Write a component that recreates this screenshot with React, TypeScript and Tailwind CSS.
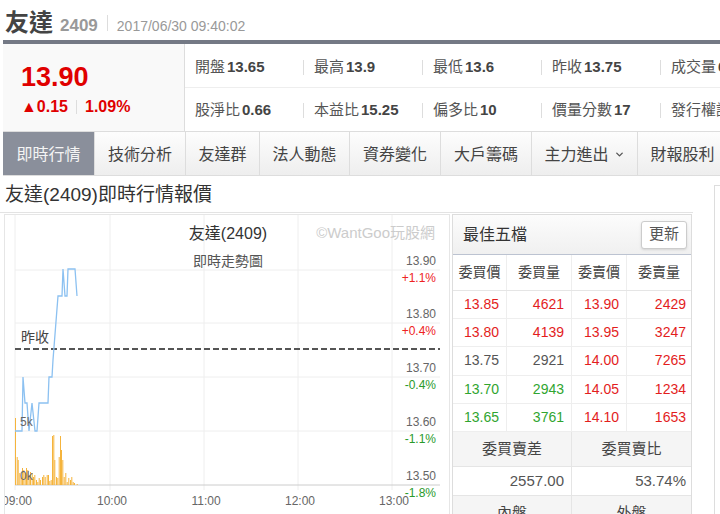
import { ChevronDown } from "lucide-react";

const infoRows = [
  [
    ["開盤", "13.65"],
    ["最高", "13.9"],
    ["最低", "13.6"],
    ["昨收", "13.75"],
    ["成交量", "6548"],
  ],
  [
    ["股淨比", "0.66"],
    ["本益比", "15.25"],
    ["偏多比", "10"],
    ["價量分數", "17"],
    ["發行權證", "有"],
  ],
];

const tabs = [
  { label: "即時行情", w: "w-[92px]", active: true },
  { label: "技術分析", w: "w-[91px]" },
  { label: "友達群", w: "w-[74px]" },
  { label: "法人動態", w: "w-[90px]" },
  { label: "資券變化", w: "w-[91px]" },
  { label: "大戶籌碼", w: "w-[91px]" },
  { label: "主力進出", w: "w-[106px]", menu: true },
  { label: "財報股利", w: "w-[90px]" },
];

const RED = "text-[#e31d1d]";
const GREEN = "text-[#30a530]";
const GRAY = "text-[#555]";

const book = [
  { bid: "13.85", bv: "4621", ask: "13.90", av: "2429", c: RED },
  { bid: "13.80", bv: "4139", ask: "13.95", av: "3247", c: RED },
  { bid: "13.75", bv: "2921", ask: "14.00", av: "7265", c: GRAY },
  { bid: "13.70", bv: "2943", ask: "14.05", av: "1234", c: GREEN },
  { bid: "13.65", bv: "3761", ask: "14.10", av: "1653", c: GREEN },
];

// volume bars, page coords [x, top]
const bars: [number, number][] = [
  [15, 418], [16.7, 457], [17.7, 460], [19.3, 473], [20.7, 478], [22, 468],
  [23.3, 470], [24.7, 473], [26, 468], [27.3, 470], [28.7, 475], [30, 472],
  [31.7, 473], [33, 477], [34.3, 475], [36, 480], [37.3, 482], [38.7, 478],
  [40, 480], [42, 477], [43.3, 475], [44.7, 477], [46.7, 475], [48, 475],
  [49.3, 481], [50.7, 480], [52, 436], [53.3, 435], [54.3, 460], [56, 477],
  [57.3, 478], [58.7, 457], [60, 436], [61, 450], [62.3, 460], [63.7, 477],
  [65.3, 473], [66.7, 482], [68.3, 478], [70, 480], [71.3, 477], [72.7, 482],
  [74, 483], [76.7, 484],
];

const priceLine =
  "M15,431 L22,431 L23,377 L25,403 L27,403 L29,431 L32,403 L35,431 L37,431 L39,403 L48,403 L49,377 L52,377 L53,360 L58,296 L62,296 L63,269 L65,296 L67,296 L68,269 L75,269 L77,296";

const levels = [
  { y: 270, p: "13.90", pct: "+1.1%", up: true },
  { y: 323, p: "13.80", pct: "+0.4%", up: true },
  { y: 377, p: "13.70", pct: "-0.4%", up: false },
  { y: 431, p: "13.60", pct: "-1.1%", up: false },
  { y: 485, p: "13.50", pct: "-1.8%", up: false },
];

const hours = [
  { x: 15, t: "09:00" },
  { x: 110, t: "10:00" },
  { x: 204, t: "11:00" },
  { x: 298, t: "12:00" },
  { x: 392, t: "13:00" },
];

function TrendChart() {
  return (
    <svg width={444} height={299} viewBox="5 215 444 299" className="block">
      {hours.map((h) => (
        <line key={h.t} x1={h.x} x2={h.x} y1={215} y2={490} stroke="#eeeeee" strokeWidth={1} />
      ))}
      {levels.map((l) => (
        <line
          key={l.p}
          x1={15}
          x2={440}
          y1={l.y}
          y2={l.y}
          stroke={l.y === 485 ? "#cccccc" : "#eeeeee"}
          strokeWidth={1}
        />
      ))}
      <line x1={15} x2={440} y1={349} y2={349} stroke="#555" strokeWidth={2} strokeDasharray="6 3" />

      <text x={228} y={239} textAnchor="middle" fontSize={16} fill="#333">友達(2409)</text>
      <text x={228} y={266} textAnchor="middle" fontSize={14} fill="#555">即時走勢圖</text>
      <text x={435} y={238} textAnchor="end" fontSize={15} fill="#cccccc">©WantGoo玩股網</text>

      {bars.map(([x, top], i) => (
        <rect key={i} x={x} y={top} width={1} height={485 - top} fill="#f5b43c" />
      ))}
      <path d={priceLine} fill="none" stroke="#8cc1f1" strokeWidth={1.3} />

      <text x={21} y={342} fontSize={14} fill="#444">昨收</text>
      <text x={20} y={426} fontSize={12} fill="#666">5k</text>
      <text x={20} y={480} fontSize={12} fill="#666">0k</text>

      {levels.map((l) => (
        <g key={l.pct}>
          <text x={436} y={l.y - 5} textAnchor="end" fontSize={12} fill="#666">{l.p}</text>
          <text x={436} y={l.y + 12} textAnchor="end" fontSize={12} fill={l.up ? "#ee2222" : "#2a9a2a"}>
            {l.pct}
          </text>
        </g>
      ))}
      {hours.map((h) => (
        <text key={h.t} x={h.x + 2} y={505} textAnchor="middle" fontSize={12} fill="#666">
          {h.t}
        </text>
      ))}
    </svg>
  );
}

function BestFive() {
  return (
    <div className="w-[240px] h-[301px] shrink-0 border border-[#dddddd] overflow-hidden">
      <div className="flex h-[40px] items-center justify-between border-b border-[#bcc3d1] bg-gradient-to-b from-[#fcfcfc] to-[#f0f0f0] pl-[10px] pr-[4px]">
        <span className="text-[16px] text-[#333]">最佳五檔</span>
        <button className="h-[28px] w-[46px] rounded-[3px] border border-[#cccccc] bg-white text-[15px] text-[#555] shadow-sm">
          更新
        </button>
      </div>
      <div className="grid h-[36px] grid-cols-[54px_65px_55px_1fr] border-b border-[#e5e5e5] text-[14px] text-[#444]">
        {["委買價", "委買量", "委賣價", "委賣量"].map((h, i) => (
          <div key={h} className={`flex items-center justify-center ${i < 3 ? "border-r border-[#eeeeee]" : ""}`}>
            {h}
          </div>
        ))}
      </div>
      {book.map((r) => (
        <div key={r.bid} className="grid h-[28.2px] grid-cols-[54px_65px_55px_1fr] border-b border-[#eeeeee] text-[14px]">
          <div className={`flex items-center justify-end border-r border-[#eeeeee] pr-[7px] ${r.c}`}>{r.bid}</div>
          <div className={`flex items-center justify-end border-r border-[#eeeeee] pr-[7px] ${r.c}`}>{r.bv}</div>
          <div className={`flex items-center justify-end border-r border-[#eeeeee] pr-[7px] ${RED}`}>{r.ask}</div>
          <div className={`flex items-center justify-end pr-[5px] ${RED}`}>{r.av}</div>
        </div>
      ))}
      <div className="grid h-[35px] grid-cols-2 border-b border-[#e5e5e5] bg-[#f5f5f5] text-[15px] text-[#444]">
        <div className="flex items-center justify-center border-r border-[#e5e5e5]">委買賣差</div>
        <div className="flex items-center justify-center">委買賣比</div>
      </div>
      <div className="grid h-[29px] grid-cols-2 border-b border-[#e5e5e5] text-[15px] text-[#555]">
        <div className="flex items-center justify-end border-r border-[#e5e5e5] pr-[7px]">2557.00</div>
        <div className="flex items-center justify-end pr-[5px]">53.74%</div>
      </div>
      <div className="grid h-[35px] grid-cols-2 bg-[#f5f5f5] text-[15px] text-[#444]">
        <div className="flex items-center justify-center border-r border-[#e5e5e5]">內盤</div>
        <div className="flex items-center justify-center">外盤</div>
      </div>
    </div>
  );
}

export default function App() {
  return (
    <div className="relative h-[514px] w-[720px] overflow-hidden bg-white font-['Liberation_Sans','Noto_Sans_CJK_TC',sans-serif]">
      {/* title line */}
      <div className="flex h-[40px] items-baseline pl-[5px] pt-[11px]">
        <span className="text-[24px] font-semibold leading-none text-[#444]">友達</span>
        <span className="ml-[7px] text-[17px] font-bold leading-none text-[#999]">2409</span>
        <span className="mx-[9px] h-[16px] border-l border-[#dddddd]" />
        <span className="text-[14px] leading-none text-[#999]">2017/06/30 09:40:02</span>
      </div>
      <div className="ml-[3px] h-[4px] bg-[#747985]" />

      {/* quote summary */}
      <div className="ml-[3px] flex h-[87px]">
        <div className="w-[182px] shrink-0 border-r border-[#dddddd] bg-[#f9f9f9] pl-[18px] pt-[18px]">
          <div className="text-[27px] font-bold leading-[30px] text-[#e00000]">13.90</div>
          <div className="mt-[5px] flex items-center text-[16px] font-bold leading-[20px] text-[#e00000]">
            <span>▲0.15</span>
            <span className="mx-[8px] h-[14px] border-l border-[#dddddd]" />
            <span>1.09%</span>
          </div>
        </div>
        <div className="min-w-0 flex-1 overflow-hidden">
          {infoRows.map((row, ri) => (
            <div
              key={ri}
              className={`flex ${ri === 0 ? "h-[44px] border-b border-[#eeeeee] pt-[3px]" : "h-[43px] pt-[2px]"}`}
            >
              {row.map(([k, v], ci) => (
                <div key={k} className={`flex shrink-0 items-center whitespace-nowrap ${ci === 0 ? "w-[118px] pl-[10px]" : "w-[119px]"}`}>
                  {ci > 0 && <span className="mr-[10px] h-[15px] border-l border-[#dddddd]" />}
                  <span className="text-[15px] text-[#555]">{k}</span>
                  <span className="ml-[2px] text-[15px] font-bold text-[#444]">{v}</span>
                </div>
              ))}
            </div>
          ))}
        </div>
      </div>

      {/* tabs */}
      <nav className="ml-[3px] flex h-[45px] border-y border-[#dddddd]">
        {tabs.map((t) => (
          <div
            key={t.label}
            className={`flex shrink-0 items-center justify-center gap-[5px] border-r border-[#dddddd] pt-[2px] text-[16px] ${t.w} ${
              t.active ? "bg-[#8a8f9b] text-[#f4f4f4]" : "bg-gradient-to-b from-[#fdfdfd] to-[#eeeeee] text-[#444]"
            }`}
          >
            {t.label}
            {t.menu && <ChevronDown size={11} strokeWidth={3} className="text-[#555]" />}
          </div>
        ))}
      </nav>

      <div className="flex">
        <div className="w-[693px] shrink-0">
          <div className="flex h-[37px] items-center border-b border-[#e3e3e3] pl-[5px] pt-[3px] text-[19px] text-[#333]">
            友達(2409)即時行情報價
          </div>
          <div className="flex gap-[2px] pl-[4px] pt-[1px]">
            <div className="h-[301px] w-[446px] shrink-0 border border-[#e6e6e6]">
              <TrendChart />
            </div>
            <BestFive />
          </div>
        </div>
        <div className="ml-[21px] mt-[9px] h-[400px] flex-1 border-l border-t border-[#dddddd]" />
      </div>
    </div>
  );
}
